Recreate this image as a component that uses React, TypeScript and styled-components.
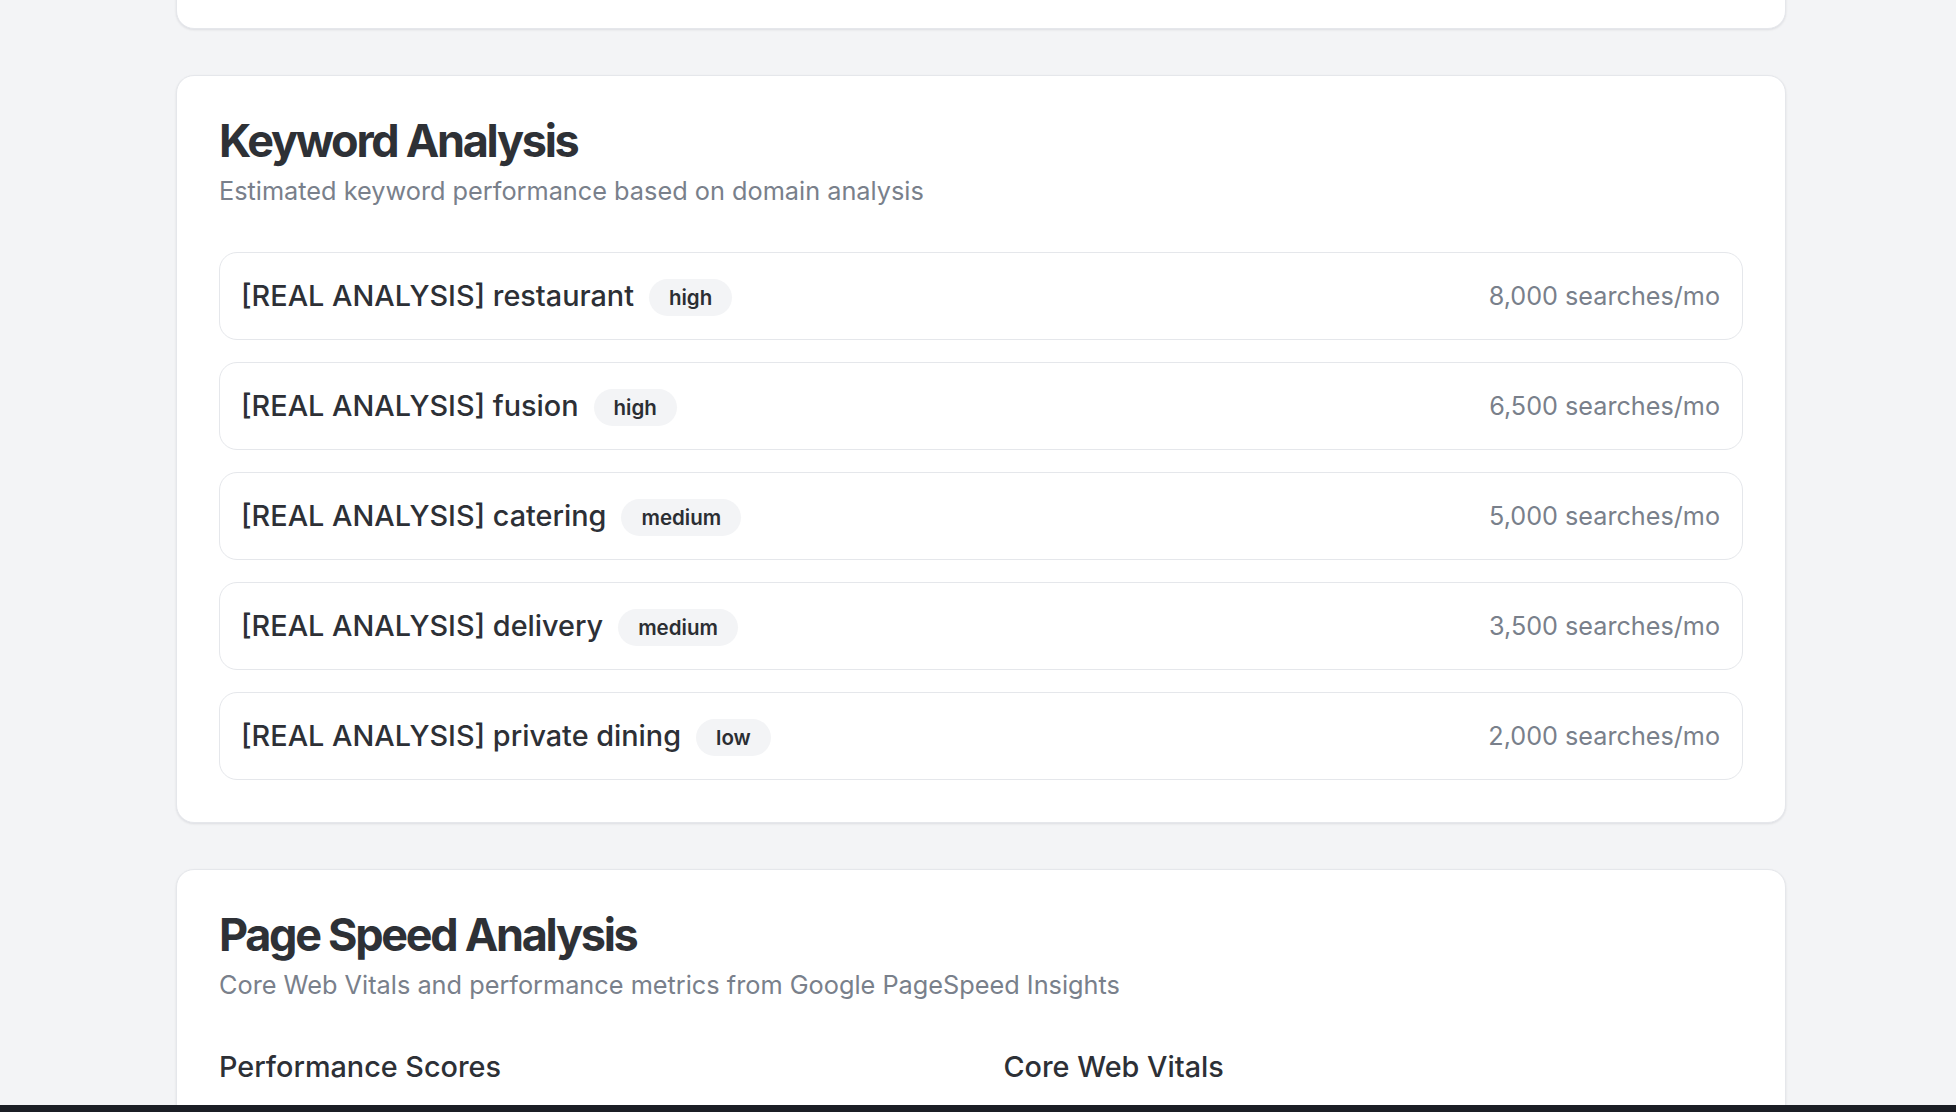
import React from "react";
import styled, { createGlobalStyle } from "styled-components";

const GlobalStyle = createGlobalStyle`
  html, body {
    margin: 0;
    padding: 0;
    background: #f3f4f6;
    font-family: Inter, "Noto Sans", "Liberation Sans", sans-serif;
    color: #2d3036;
    overflow: hidden;
  }
  * { box-sizing: border-box; }
`;

const Page = styled.main`
  display: flex;
  flex-direction: column;
  gap: 46px;
  padding: 0 170px 80px 176px;
  margin-top: -403px;
`;

const Card = styled.section`
  background: #ffffff;
  border: 1px solid #e5e7eb;
  border-radius: 18px;
  box-shadow: 0 1px 3px rgba(16, 24, 40, 0.06), 0 1px 2px rgba(16, 24, 40, 0.04);
  padding: 42px;
`;

const Spacer = styled.div<{ $h: number }>`
  height: ${(p) => p.$h}px;
`;

const Header = styled.header`
  display: flex;
  flex-direction: column;
  gap: 10px;
`;

const Title = styled.h2`
  margin: 0;
  font-size: 45px;
  line-height: 45px;
  font-weight: 700;
  letter-spacing: -2.3px;
  color: #2e3136;
`;

const Subtitle = styled.p`
  margin: 0;
  font-size: 25.3px;
  line-height: 36px;
  color: #79808b;
`;

const KeywordList = styled.ul`
  list-style: none;
  margin: 43px 0 0;
  padding: 0;
  display: flex;
  flex-direction: column;
  gap: 22px;
`;

const KeywordRow = styled.li`
  display: flex;
  align-items: center;
  justify-content: space-between;
  height: 88px;
  padding: 0 22px 0 21px;
  border: 1px solid #e5e7eb;
  border-radius: 18px;
`;

const KeywordLeft = styled.div`
  display: flex;
  align-items: center;
  gap: 15px;
`;

const KeywordName = styled.span`
  font-size: 28.8px;
  line-height: 40px;
  font-weight: 500;
  color: #2d3036;
`;

const Badge = styled.span`
  display: inline-flex;
  align-items: center;
  height: 37px;
  padding: 0 20px;
  margin-top: 3px;
  border-radius: 999px;
  background: #f3f4f6;
  font-size: 20.5px;
  font-weight: 600;
  color: #2b2e33;
`;

const Volume = styled.span`
  font-size: 25.2px;
  line-height: 36px;
  color: #79808b;
`;

const Columns = styled.div`
  display: grid;
  grid-template-columns: 1fr 1fr;
  gap: 45px;
  margin-top: 44px;
`;

const Column = styled.div`
  display: flex;
  flex-direction: column;
  gap: 24px;
`;

const ColumnTitle = styled.h3`
  margin: 0;
  font-size: 28.8px;
  line-height: 40px;
  font-weight: 500;
  color: #2d3036;
`;

const MetricRow = styled.div`
  display: flex;
  justify-content: space-between;
  font-size: 25px;
  color: #79808b;
`;

const BottomBar = styled.div`
  position: fixed;
  left: 0;
  right: 0;
  bottom: 0;
  height: 7px;
  background: #1b1e25;
`;

type Keyword = { name: string; level: string; volume: string };

const keywords: Keyword[] = [
  { name: "[REAL ANALYSIS] restaurant", level: "high", volume: "8,000 searches/mo" },
  { name: "[REAL ANALYSIS] fusion", level: "high", volume: "6,500 searches/mo" },
  { name: "[REAL ANALYSIS] catering", level: "medium", volume: "5,000 searches/mo" },
  { name: "[REAL ANALYSIS] delivery", level: "medium", volume: "3,500 searches/mo" },
  { name: "[REAL ANALYSIS] private dining", level: "low", volume: "2,000 searches/mo" },
];

export default function App() {
  return (
    <>
      <GlobalStyle />
      <Page>
        <Card>
          <Spacer $h={346} />
        </Card>
        <Card>
          <Header>
            <Title>Keyword Analysis</Title>
            <Subtitle>Estimated keyword performance based on domain analysis</Subtitle>
          </Header>
          <KeywordList>
            {keywords.map((k) => (
              <KeywordRow key={k.name}>
                <KeywordLeft>
                  <KeywordName>{k.name}</KeywordName>
                  <Badge>{k.level}</Badge>
                </KeywordLeft>
                <Volume>{k.volume}</Volume>
              </KeywordRow>
            ))}
          </KeywordList>
        </Card>
        <Card>
          <Header>
            <Title>Page Speed Analysis</Title>
            <Subtitle>Core Web Vitals and performance metrics from Google PageSpeed Insights</Subtitle>
          </Header>
          <Columns>
            <Column>
              <ColumnTitle>Performance Scores</ColumnTitle>
              <MetricRow><span>Performance</span><span>—</span></MetricRow>
              <MetricRow><span>Accessibility</span><span>—</span></MetricRow>
            </Column>
            <Column>
              <ColumnTitle>Core Web Vitals</ColumnTitle>
              <MetricRow><span>Largest Contentful Paint</span><span>—</span></MetricRow>
              <MetricRow><span>Cumulative Layout Shift</span><span>—</span></MetricRow>
            </Column>
          </Columns>
        </Card>
      </Page>
      <BottomBar />
    </>
  );
}
